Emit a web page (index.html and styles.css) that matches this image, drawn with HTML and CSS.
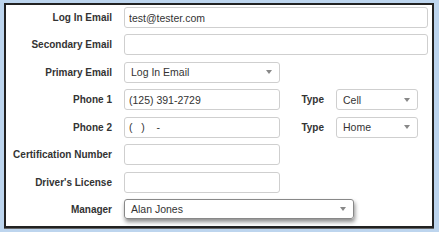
FILE: index.html
```html
<!DOCTYPE html>
<html>
<head>
<meta charset="utf-8">
<link rel="stylesheet" href="styles.css">
</head>
<body>
<div class="panel">
  <div class="form">
    <label class="lbl">Log In Email</label>
    <input class="inp wide" type="text" value="test@tester.com">

    <label class="lbl">Secondary Email</label>
    <input class="inp wide" type="text" value="">

    <label class="lbl">Primary Email</label>
    <div class="select"><span>Log In Email</span><i class="caret"></i></div>
    <span></span><span></span>

    <label class="lbl">Phone 1</label>
    <input class="inp" type="text" value="(125) 391-2729">
    <label class="lbl type">Type</label>
    <div class="select small"><span>Cell</span><i class="caret"></i></div>

    <label class="lbl">Phone 2</label>
    <input class="inp" type="text" value="(   )    -">
    <label class="lbl type">Type</label>
    <div class="select small"><span>Home</span><i class="caret"></i></div>

    <label class="lbl">Certification Number</label>
    <input class="inp" type="text" value="">
    <span></span><span></span>

    <label class="lbl">Driver's License</label>
    <input class="inp" type="text" value="">
    <span></span><span></span>

    <label class="lbl">Manager</label>
    <div class="select manager"><span>Alan Jones</span><i class="caret"></i></div>
  </div>
</div>
</body>
</html>
```
FILE: styles.css
```css
html, body {
  margin: 0;
  padding: 0;
}
body {
  background: #bdd5ee;
  width: 439px;
  height: 232px;
  overflow: hidden;
  font-family: "Liberation Sans", Arial, sans-serif;
}
.panel {
  margin: 3px 0 0 4px;
  width: 426px;
  height: 221px;
  background: #fff;
  border: 2px solid #222;
  box-shadow: 0 1px 0 #666;
  box-sizing: content-box;
}
.form {
  display: grid;
  grid-template-columns: 106px 156px 32px 92px;
  grid-auto-rows: 21px;
  column-gap: 12px;
  row-gap: 6.43px;
  padding-top: 2px;
}
.lbl {
  font-weight: bold;
  font-size: 10px;
  color: #333;
  text-align: right;
  align-self: center;
  white-space: nowrap;
}
.lbl.type {
  text-align: right;
}
.inp {
  box-sizing: border-box;
  width: 156px;
  height: 21px;
  margin: 0;
  border: 1px solid #cfcfcf;
  border-radius: 3px;
  padding: 0 4px;
  font-family: "Liberation Sans", Arial, sans-serif;
  font-size: 10.5px;
  color: #333;
  background: #fff;
  outline: none;
}
.inp.wide {
  grid-column: 2 / -1;
  width: 304px;
}
.select {
  box-sizing: border-box;
  width: 156px;
  height: 21px;
  border: 1px solid #cfcfcf;
  border-radius: 3px;
  padding: 0 6px;
  font-size: 10.5px;
  color: #333;
  display: flex;
  align-items: center;
  justify-content: space-between;
}
.select.small {
  width: 82px;
}
.select.manager {
  grid-column: 2 / span 3;
  width: 230px;
  height: 20px;
  border-color: #888;
  box-shadow: 1px 3px 4px rgba(0,0,0,0.45);
}
.caret {
  width: 0;
  height: 0;
  border-left: 3.5px solid transparent;
  border-right: 3.5px solid transparent;
  border-top: 4px solid #888;
  margin-right: 1px;
}
```
